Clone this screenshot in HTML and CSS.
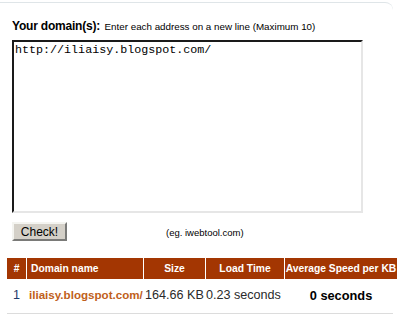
FILE: index.html
```
<!DOCTYPE html>
<html lang="en">
<head>
  <meta charset="UTF-8">
  <title>Website Speed Test</title>
  <link rel="stylesheet" href="styles.css">
</head>
<body>

<div class="panel">
  <form class="domain-form">
    <div class="label-row">
      <b class="label">Your domain(s):</b>
      <span class="hint">Enter each address on a new line (Maximum 10)</span>
    </div>
    <textarea class="domains" spellcheck="false">http://iliaisy.blogspot.com/</textarea>
    <div class="submit-row">
      <button type="button" class="check-btn">Check!</button>
      <span class="example">(eg. iwebtool.com)</span>
    </div>
  </form>

  <table class="results">
    <tr>
      <th class="col-num">#</th>
      <th class="col-domain">Domain name</th>
      <th class="col-size">Size</th>
      <th class="col-time">Load Time</th>
      <th class="col-speed">Average Speed per KB</th>
    </tr>
    <tr>
      <td class="col-num">1</td>
      <td class="col-domain"><a href="#">iliaisy.blogspot.com/</a></td>
      <td class="col-size">164.66 KB</td>
      <td class="col-time">0.23 seconds</td>
      <td class="col-speed"><b>0 seconds</b></td>
    </tr>
  </table>
  <div class="rule"></div>
</div>

</body>
</html>
```

FILE: styles.css
```
body {
  margin: 0;
  font-family: "Liberation Sans", Arial, sans-serif;
  background: #ffffff;
  color: #000000;
}

.panel {
  margin-top: 2px;
  width: 393px;
  height: 330px;
  border-top: 1px solid #dfe5e8;
  border-top-right-radius: 8px;
}

.domain-form {
  padding: 13px 0 0 12px;
}

.label-row {
  height: 24px;
}

.label {
  font-size: 12px;
  letter-spacing: -0.2px;
}

.hint {
  font-size: 9.8px;
}

.domains {
  display: block;
  box-sizing: border-box;
  width: 351px;
  height: 173px;
  margin: 0;
  padding: 1px 1px;
  border: 2px solid;
  border-color: #1a1a1a #e6e6e6 #e6e6e6 #1a1a1a;
  font-family: "Liberation Mono", "Courier New", monospace;
  font-size: 11.7px;
  line-height: 14px;
  resize: none;
  outline: none;
}

.submit-row {
  display: flex;
  align-items: center;
  margin-top: 9px;
  height: 19px;
}

.check-btn {
  box-sizing: border-box;
  width: 55px;
  height: 19px;
  padding: 0;
  background: #d4d0c8;
  border: 2px solid;
  border-color: #f4f4f0 #7a7a78 #7a7a78 #f4f4f0;
  font-family: "Liberation Sans", Arial, sans-serif;
  font-size: 12px;
  color: #000000;
}

.example {
  margin-left: 99px;
  margin-top: 1px;
  font-size: 9.5px;
}

.results {
  table-layout: fixed;
  width: 392px;
  margin: 17px 0 0 6px;
  border-collapse: separate;
  border-spacing: 1px 0;
  font-size: 12.6px;
}

.results th,
.results td {
  box-sizing: border-box;
  padding: 0;
  white-space: nowrap;
  overflow: hidden;
}

.results th {
  height: 21px;
  background: #a33602;
  color: #ffffff;
  font-size: 10.3px;
  font-weight: bold;
  text-align: center;
}

.results td {
  height: 32px;
  text-align: left;
  color: #2a2a2a;
  overflow: visible;
}

.results th.col-domain {
  text-align: left;
  padding-left: 4px;
}

.col-num { width: 19px; }
.col-domain { width: 116px; }
.col-size { width: 61px; }
.col-time { width: 78px; }
.col-speed { width: 112px; }

.results td.col-num {
  text-align: center;
  color: #1f3a6a;
}

.results td.col-domain {
  padding-left: 2px;
}

.results td.col-domain a {
  color: #c0601a;
  font-weight: bold;
  font-size: 11.6px;
  text-decoration: none;
}

.results td.col-size {
  padding-left: 1px;
}

.results td.col-speed {
  text-align: center;
  color: #000000;
  font-size: 12.8px;
}

.rule {
  margin: 2px 0 0 7px;
  width: 386px;
  height: 1px;
  background: #dcdcdc;
}
```
